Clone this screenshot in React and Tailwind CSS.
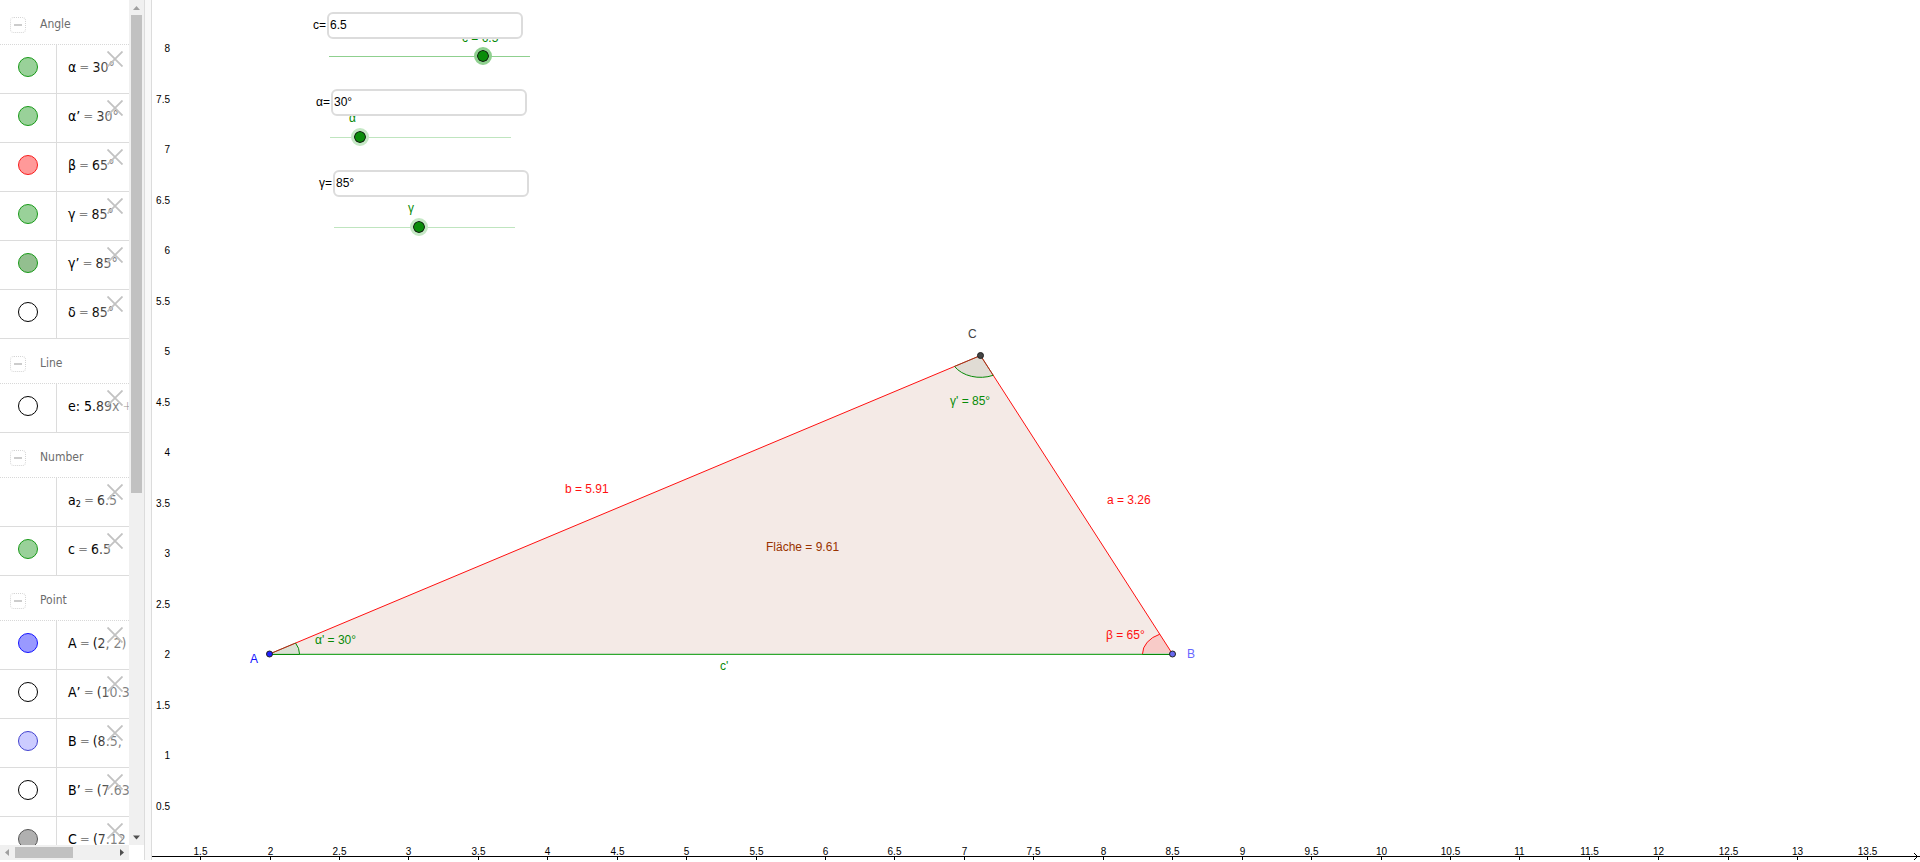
import React from "react";

const GREEN = "#078a07";
const RED = "#ff1010";

const marbles = {
  green: "border-[#189a18] bg-[#99d199]",
  muted: "border-[#189a18] bg-[#93bf8f]",
  red: "border-[#f81c1c] bg-[#ff9999]",
  open: "border-black bg-white",
  blue: "border-[#1414ff] bg-[#9999ff]",
  pale: "border-[#4343cf] bg-[#ccccff]",
  gray: "border-[#555555] bg-[#b0b0b0]",
};

const groups = [
  {
    title: "Angle",
    rows: [
      { name: "α", value: "30°", marble: "green" },
      { name: "α’", value: "30°", marble: "green" },
      { name: "β", value: "65°", marble: "red" },
      { name: "γ", value: "85°", marble: "green" },
      { name: "γ’", value: "85°", marble: "muted" },
      { name: "δ", value: "85°", marble: "open" },
    ],
  },
  { title: "Line", rows: [{ name: "e: 5.89x", sign: "+", value: "", marble: "open" }] },
  {
    title: "Number",
    rows: [
      { name: "a", sub: "2", value: "6.5" },
      { name: "c", value: "6.5", marble: "green" },
    ],
  },
  {
    title: "Point",
    rows: [
      { name: "A", value: "(2, 2)", marble: "blue" },
      { name: "A’", value: "(10.3", marble: "open" },
      { name: "B", value: "(8.5,", marble: "pale" },
      { name: "B’", value: "(7.63", marble: "open" },
      { name: "C", value: "(7.12", marble: "gray" },
    ],
  },
];

function GroupHeader({ title }) {
  return (
    <div className="flex h-[45px] shrink-0 items-start border-b border-dotted border-[#d8d8d8] pl-[10px]">
      <button
        aria-label={`Collapse ${title}`}
        className="mt-[17px] flex size-4 items-center justify-center rounded border border-dotted border-[#d4d4d4]"
      >
        <span className="h-[2px] w-2 bg-[#cccccc]" />
      </button>
      <h2 className="mt-[14px] ml-[14px] font-['DejaVu_Sans_Condensed','DejaVu_Sans',sans-serif] text-[12px] leading-[20px] text-[#6c6c6c]">
        {title}
      </h2>
    </div>
  );
}

function Row({ row }) {
  return (
    <li className="relative flex h-[49px] shrink-0 border-b border-[#dcdcdc]">
      <div className="w-[57px] shrink-0 border-r border-[#dcdcdc] pt-[12px] pl-[18px]">
        {row.marble && (
          <button
            aria-label={`Show or hide ${row.name}`}
            className={`block size-5 rounded-full border ${marbles[row.marble]}`}
          />
        )}
      </div>
      <div className="flex gap-[3px] pt-[12px] pl-[11px] font-['DejaVu_Sans_Condensed','DejaVu_Sans',sans-serif] text-[14px] leading-[20px] whitespace-nowrap text-black">
        <span>
          {row.name}
          {row.sub && <sub className="text-[9px]">{row.sub}</sub>}
        </span>
        <span className="font-['DejaVu_Sans',sans-serif] text-[12px] font-extralight text-[#222222]">{row.sign || "="}</span>
        <span>{row.value}</span>
      </div>
      <div className="absolute inset-y-0 right-0 w-9 bg-linear-to-r from-white/0 via-white/50 to-white/50" />
      <button aria-label={`Delete ${row.name}`} className="absolute top-[6px] right-[6px] size-4">
        <svg viewBox="0 0 16 16" className="size-4" stroke="#c2c2c2" strokeWidth="1.8">
          <path d="M0.5 0.5 L15.5 15.5 M15.5 0.5 L0.5 15.5" />
        </svg>
      </button>
    </li>
  );
}

function Sidebar() {
  return (
    <aside className="flex w-36 shrink-0 flex-col bg-white">
      <div className="flex min-h-0 flex-1">
        <div className="flex min-w-0 flex-1 flex-col overflow-hidden">
          {groups.map((g) => (
            <section key={g.title} className="shrink-0">
              <GroupHeader title={g.title} />
              <ul>
                {g.rows.map((r) => (
                  <Row key={r.name} row={r} />
                ))}
              </ul>
            </section>
          ))}
        </div>
        <div className="flex w-[15px] shrink-0 flex-col items-center bg-[#f0f0f0]">
          <svg viewBox="0 0 15 15" className="size-[15px] shrink-0" fill="#a0a0a0">
            <path d="M4 10 L7.5 6 L11 10 Z" />
          </svg>
          <div className="w-[11px] basis-[478px] bg-[#c1c1c1]" />
          <svg viewBox="0 0 15 15" className="mt-auto size-[15px] shrink-0" fill="#505050">
            <path d="M4 5.5 L7.5 9.5 L11 5.5 Z" />
          </svg>
        </div>
      </div>
      <div className="mr-[15px] flex h-[15px] shrink-0 items-center bg-[#f0f0f0]">
        <svg viewBox="0 0 15 15" className="size-[15px]" fill="#a0a0a0">
          <path d="M9 4 L5 7.5 L9 11 Z" />
        </svg>
        <div className="h-[11px] w-[58px] bg-[#c1c1c1]" />
        <svg viewBox="0 0 15 15" className="ml-auto size-[15px]" fill="#505050">
          <path d="M6 4 L10 7.5 L6 11 Z" />
        </svg>
      </div>
    </aside>
  );
}

const xTicks = Array.from({ length: 25 }, (_, i) => 1.5 + i * 0.5);
const yTicks = Array.from({ length: 16 }, (_, i) => 0.5 + i * 0.5);
const toX = (v) => Math.round(117.5 + (v - 2) * 138.88) + 0.5;
const toY = (v) => Math.round(654 - (v - 2) * 101);

function Drawing() {
  return (
    <svg
      className="absolute inset-0 size-full font-['Liberation_Sans',Arial,sans-serif] text-[12px]"
      role="img"
      aria-label="Triangle ABC"
    >
      <g className="text-[10px]" fill="#000">
        {yTicks.map((v) => (
          <text key={v} x="18" y={toY(v) + 4} textAnchor="end">
            {v}
          </text>
        ))}
        {xTicks.map((v) => (
          <text key={v} x={toX(v)} y="855" textAnchor="middle">
            {v}
          </text>
        ))}
      </g>
      <g stroke="#000">
        <line x1="0" x2="100%" y1="856.5" y2="856.5" />
        {xTicks.map((v) => (
          <line key={v} x1={toX(v)} x2={toX(v)} y1="856" y2="860" />
        ))}
        <svg x="100%" y="856" overflow="visible">
          <path d="M-6 -3 L-2.5 0.5 L-6 4" fill="none" />
        </svg>
      </g>

      <path d="M117.5 654 L1020.5 654 L828.5 355.5 Z" fill="#f4eae6" />
      <path d="M117.5 654 L147.5 654 A30 21.8 0 0 0 143.5 643 Z" fill="#dbe1d4" />
      <path d="M828.5 355.5 L802.5 366.4 A30 21.8 0 0 0 841.2 375.3 Z" fill="#e0dcd4" />
      <path d="M1020.5 654 L990.5 654 A30 21.8 0 0 1 1007.8 634.2 Z" fill="#f8cbc8" />
      <line x1="117.5" x2="1020.5" y1="653.5" y2="653.5" stroke="#c5d5be" />
      <line x1="117.5" x2="1020.5" y1="654.5" y2="654.5" stroke="#2eaa2e" />
      <path d="M117.5 654 L828.5 355.5 L1020.5 654" fill="none" stroke="#ff1010" />
      <path d="M147.5 654 A30 21.8 0 0 0 143.5 643" fill="none" stroke={GREEN} />
      <path d="M802.5 366.4 A30 21.8 0 0 0 841.2 375.3" fill="none" stroke={GREEN} />
      <path d="M990.5 654 A30 21.8 0 0 1 1007.8 634.2" fill="none" stroke={RED} />
      <path d="M117.5 654 L143.5 643 M828.5 355.5 L802.5 366.4 M828.5 355.5 L841.2 375.3" stroke="#6b4a1a" strokeOpacity="0.7" />
      <path d="M117.5 654.5 H147.5 M990.5 654.5 H1020.5" stroke={GREEN} />
      <circle cx="117.5" cy="654" r="3" fill="#1f1fff" stroke="#222" />
      <circle cx="1020.5" cy="654" r="3" fill="#6868f0" stroke="#222" />
      <circle cx="828.5" cy="355.5" r="3" fill="#444" stroke="#222" />

      <g fill={GREEN}>
        <text x="163" y="644">α' = 30°</text>
        <text x="798" y="405">γ' = 85°</text>
        <text x="568" y="670">c'</text>
        <text x="310" y="42">c = 6.5</text>
        <text x="197" y="122">α</text>
        <text x="256" y="212">γ</text>
      </g>
      <g fill={RED}>
        <text x="413" y="493">b = 5.91</text>
        <text x="955" y="504">a = 3.26</text>
        <text x="954" y="639">β = 65°</text>
      </g>
      <text x="614" y="551" fill="#993300">Fläche = 9.61</text>
      <text x="98" y="663" fill="#1010ff">A</text>
      <text x="1035" y="658" fill="#6868ff">B</text>
      <text x="816" y="338" fill="#444">C</text>
    </svg>
  );
}

function Field({ id, label, value, place }) {
  return (
    <div className={`absolute flex items-center gap-px ${place}`}>
      <label htmlFor={id} className="pb-px">{label}</label>
      <input
        id={id}
        defaultValue={value}
        className="h-[27px] w-[196px] rounded-md border-2 border-[#dcdcdc] bg-white pb-[2px] pl-px outline-none"
      />
    </div>
  );
}

function Slider({ label, min, max, step, value, place }) {
  return (
    <input
      type="range"
      aria-label={label}
      min={min}
      max={max}
      step={step}
      defaultValue={value}
      className={`absolute h-[18px] appearance-none bg-[length:calc(100%-18px)_1px] bg-center bg-no-repeat outline-none [&::-webkit-slider-thumb]:size-[18px] [&::-webkit-slider-thumb]:appearance-none [&::-webkit-slider-thumb]:rounded-full [&::-webkit-slider-thumb]:border-[3px] [&::-webkit-slider-thumb]:bg-[#0a8c0a] [&::-webkit-slider-thumb]:bg-clip-padding [&::-webkit-slider-thumb]:shadow-[inset_0_0_0_1px_#111] ${place}`}
    />
  );
}

export default function App() {
  return (
    <div className="flex h-screen overflow-hidden bg-white pb-[2px]">
      <Sidebar />
      <div className="w-2 shrink-0 border-x border-[#dcdcdc] bg-[#f8f8f8]" />
      <main className="relative min-w-0 flex-1 overflow-hidden font-['Liberation_Sans',Arial,sans-serif] text-[12px] text-black">
        <Drawing />
        <Field id="c" label="c=" value="6.5" place="top-[12px] left-[161px]" />
        <Field id="alpha" label="α=" value="30°" place="top-[89px] left-[164px]" />
        <Field id="gamma" label="γ=" value="85°" place="top-[170px] left-[167px]" />
        <Slider
          label="c"
          min="0"
          max="8.5"
          step="0.1"
          value="6.5"
          place="top-[47px] left-[168px] w-[219px] bg-[linear-gradient(#8fd08f,#8fd08f)] [&::-webkit-slider-thumb]:border-[#8fd08f]"
        />
        <Slider
          label="α"
          min="0"
          max="180"
          step="1"
          value="30"
          place="top-[128px] left-[169px] w-[199px] bg-[linear-gradient(#bfe5bf,#bfe5bf)] [&::-webkit-slider-thumb]:border-[#c5e8c5]"
        />
        <Slider
          label="γ"
          min="0"
          max="180"
          step="1"
          value="85"
          place="top-[218px] left-[173px] w-[199px] bg-[linear-gradient(#bfe5bf,#bfe5bf)] [&::-webkit-slider-thumb]:border-[#c5e8c5]"
        />
      </main>
    </div>
  );
}
